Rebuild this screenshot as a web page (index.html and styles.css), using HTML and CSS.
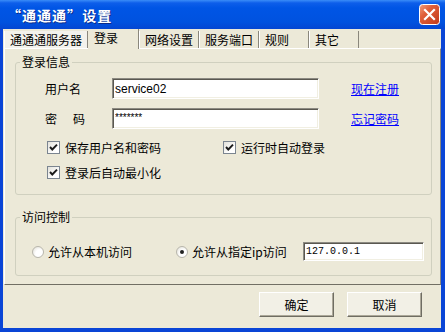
FILE: index.html
```html
<!DOCTYPE html>
<html lang="zh-CN">
<head>
    <meta charset="UTF-8">
    <title>“通通通” 设置</title>
    <link rel="stylesheet" href="styles.css">
</head>
<body>
    <div class="window">
        <div class="titlebar">
            <span class="title">“通通通” 设置</span>
            <span class="close">
                <svg width="21" height="21" viewBox="0 0 21 21">
                    <defs>
                        <linearGradient id="red" x1="0" y1="0" x2="1" y2="1">
                            <stop offset="0" stop-color="#f0a080"/>
                            <stop offset="0.35" stop-color="#e0603a"/>
                            <stop offset="1" stop-color="#c0381a"/>
                        </linearGradient>
                    </defs>
                    <rect x="0.5" y="0.5" width="20" height="20" rx="3" fill="url(#red)" stroke="#fff"/>
                    <path d="M6 6 L15 15 M15 6 L6 15" stroke="#fff" stroke-width="2.2" stroke-linecap="square"/>
                </svg>
            </span>
        </div>
        <div class="client">
            <div class="tabs">
                <div class="tab first">通通通服务器</div>
                <div class="tab active">登录</div>
                <div class="tab">网络设置</div>
                <div class="tab">服务端口</div>
                <div class="tab">规则</div>
                <div class="tab">其它</div>
            </div>
            <div class="panel">
                <fieldset class="group login">
                    <legend>登录信息</legend>
                    <div class="fields">
                        <label>用户名</label>
                        <input class="text" type="text" value="service02">
                        <a href="#">现在注册</a>
                        <label class="spaced">密码</label>
                        <input class="text secret" type="text" value="*******">
                        <a href="#">忘记密码</a>
                    </div>
                    <div class="options">
                        <label class="check"><span class="box"><svg width="11" height="11" viewBox="0 0 11 11"><path d="M2 5 L4.3 7.5 L9 2.6" fill="none" stroke="#1a1a1a" stroke-width="1.9"/></svg></span>保存用户名和密码</label>
                        <label class="check"><span class="box"><svg width="11" height="11" viewBox="0 0 11 11"><path d="M2 5 L4.3 7.5 L9 2.6" fill="none" stroke="#1a1a1a" stroke-width="1.9"/></svg></span>运行时自动登录</label>
                        <label class="check"><span class="box"><svg width="11" height="11" viewBox="0 0 11 11"><path d="M2 5 L4.3 7.5 L9 2.6" fill="none" stroke="#1a1a1a" stroke-width="1.9"/></svg></span>登录后自动最小化</label>
                    </div>
                </fieldset>
                <fieldset class="group access">
                    <legend>访问控制</legend>
                    <div class="radios">
                        <label class="radio"><span class="dot"></span>允许从本机访问</label>
                        <label class="radio"><span class="dot on"></span>允许从指定ip访问</label>
                        <input class="text ip" type="text" value="127.0.0.1">
                    </div>
                </fieldset>
            </div>
            <div class="buttons">
                <button>确定</button>
                <button>取消</button>
            </div>
        </div>
    </div>
</body>
</html>
```

FILE: styles.css
```css
body {
    margin: 0;
    font-family: "Noto Sans CJK SC", sans-serif;
    font-size: 12px;
    color: #000;
    background: #fff;
}

.window {
    width: 445px;
    height: 332px;
    display: flex;
    flex-direction: column;
    background: #0a45d6;
}

/* title bar */
.titlebar {
    height: 29px;
    flex: none;
    display: flex;
    align-items: center;
    justify-content: space-between;
    padding: 0 5px 0 7px;
    box-sizing: border-box;
    background: linear-gradient(#3a8cf8 0, #0d5eea 3px, #0055e5 8px, #0052df 22px, #0446d2 29px);
    color: #fff;
}

.title {
    font-weight: bold;
    font-size: 14px;
    letter-spacing: 1px;
    word-spacing: -4px;
    text-shadow: 1px 1px #0b2a8a;
}

.close {
    display: flex;
    margin-top: -1px;
}

.client {
    flex: 1;
    margin: 0 4px 4px 3px;
    background: #ece9d8;
    display: flex;
    flex-direction: column;
}

/* tabs */
.tabs {
    display: flex;
    align-items: flex-end;
    height: 19px;
    flex: none;
    padding-left: 1px;
}

.tab {
    height: 17px;
    line-height: 17px;
    min-width: 38px;
    padding: 0 5px;
    border-left: 1px solid #fff;
    border-right: 1px solid #8a877c;
    background: #ece9d8;
}

.tab.first {
    background: #f3f2ec;
}

.tab.active {
    position: relative;
    height: 20px;
    line-height: 18px;
    margin-bottom: -1px;
    padding: 0 6px 0 6px;
    border-left: none;
    background: #ece9d8;
}

.panel {
    flex: 1;
    margin-left: 1px;
    padding: 6px 8px 0 10px;
    border: 1px solid;
    border-color: #fff #8a877c #716f64 #fff;
}

/* group boxes */
.group {
    margin: 0;
    min-width: 0;
    padding: 9px 0 14px;
    border: 1px solid #d0d0bf;
    border-radius: 3px;
}

.group legend {
    margin-left: 4px;
    padding: 0 2px;
    line-height: 14px;
}

.access {
    margin-top: 15px;
    padding-top: 18px;
}

.fields {
    display: grid;
    grid-template-columns: 67px 207px auto;
    grid-auto-rows: 21px;
    row-gap: 9px;
    align-items: center;
    padding-left: 29px;
}

.spaced {
    letter-spacing: 16px;
}

.fields a {
    margin-left: 32px;
    color: #0000ff;
    text-decoration: underline;
}

.text {
    box-sizing: border-box;
    height: 21px;
    margin: 0;
    padding: 0 2px;
    font-family: "Liberation Sans", Arial, sans-serif;
    font-size: 12px;
    color: #000;
    background: #fff;
    border: 1px solid;
    border-color: #8c8a82 #fff #fff #8c8a82;
    box-shadow: inset 1px 1px #5a5850, inset -1px -1px #f1efe2;
    outline: none;
}

.secret {
    font-size: 10px;
    padding-bottom: 3px;
}

.ip {
    height: 19px;
    width: 121px;
    font-family: "Liberation Mono", monospace;
    font-size: 10px;
}

/* check boxes */
.options {
    display: grid;
    grid-template-columns: 176px auto;
    grid-auto-rows: 16px;
    row-gap: 9px;
    margin-top: 10px;
    padding-left: 31px;
}

.check {
    display: flex;
    align-items: center;
    gap: 5px;
}

.box {
    width: 13px;
    height: 13px;
    box-sizing: border-box;
    display: flex;
    align-items: center;
    justify-content: center;
    border: 1px solid #7b8590;
    background: linear-gradient(135deg, #e2e1da, #fff 70%);
}

/* radio buttons */
.radios {
    display: grid;
    grid-template-columns: 144px 127px 121px;
    align-items: center;
    padding-left: 16px;
}

.radio {
    display: flex;
    align-items: center;
    gap: 4px;
}

.dot {
    width: 12px;
    height: 12px;
    box-sizing: border-box;
    border-radius: 50%;
    border: 1px solid #b8b6ac;
    background: radial-gradient(circle at 65% 65%, #fff 40%, #dcdad0);
    display: flex;
    align-items: center;
    justify-content: center;
}

.dot.on::after {
    content: "";
    width: 4px;
    height: 4px;
    border-radius: 50%;
    background: #222;
}

/* dialog buttons */
.buttons {
    height: 43px;
    flex: none;
    box-sizing: border-box;
    display: flex;
    justify-content: flex-end;
    align-items: flex-start;
    gap: 13px;
    padding: 7px 19px 0 0;
}

.buttons button {
    width: 75px;
    height: 25px;
    padding: 0;
    font-family: "Noto Sans CJK SC", sans-serif;
    font-size: 12px;
    color: #000;
    background: #f2f0e6;
    border: 1px solid;
    border-color: #fff #6f6d63 #6f6d63 #fff;
    box-shadow: inset -1px -1px #aca899;
}
```
